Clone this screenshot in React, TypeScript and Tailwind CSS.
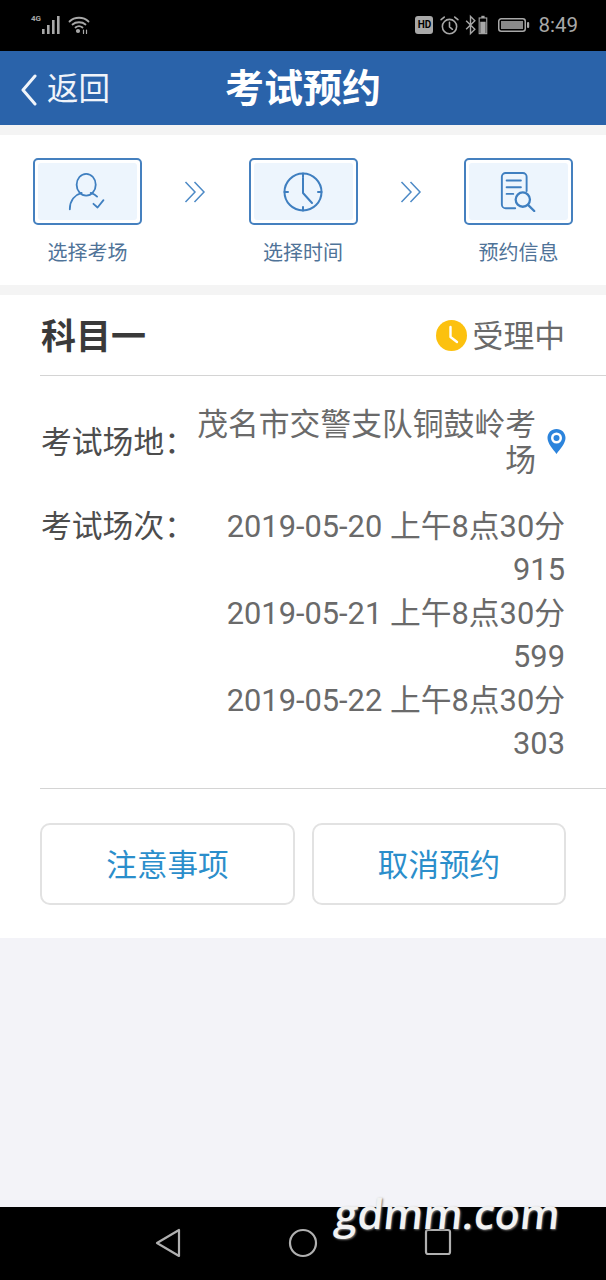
const FONT = 'font-["Roboto","Noto_Sans_CJK_SC",sans-serif]';

function StatusBar() {
  return (
    <div className="relative h-[51px] bg-black flex items-center justify-between pl-[28px] pr-[28px] shrink-0">
      <div className="flex items-center gap-[5px] mt-[-2px]">
        <svg width="35" height="22" viewBox="0 0 35 22" fill="#a8a8a8">
          <text x="3" y="7" fontSize="8" fontWeight="700" fill="#a8a8a8" fontFamily="Roboto">4G</text>
          <rect x="14" y="15" width="2.6" height="5" />
          <rect x="19" y="11" width="2.6" height="9" />
          <rect x="24" y="6" width="2.6" height="14" />
          <rect x="29" y="2" width="2.6" height="18" />
        </svg>
        <svg width="22" height="20" viewBox="0 0 22 20" fill="none" stroke="#a8a8a8" strokeWidth="1.8" strokeLinecap="round">
          <path d="M1.5 6.5c5-5 14-5 19 0" />
          <path d="M4.5 9.5c3.3-3 9.7-3 13 0" />
          <path d="M7.5 12.5c2-1.6 5-1.6 7 0" />
          <circle cx="10" cy="16" r="1.2" fill="#a8a8a8" />
          <path d="M15.5 15v3.5M18.5 18.5V15" strokeWidth="1.2" />
        </svg>
      </div>
      <div className="flex items-center text-[#a8a8a8] mt-[-1px]">
        <div className="w-[18px] h-[18px] rounded-[3px] bg-[#a8a8a8] flex items-center justify-center text-black text-[10px] font-bold font-['Roboto',sans-serif] leading-none">HD</div>
        <svg className="ml-[6px]" width="21" height="21" viewBox="0 0 20 20" fill="none" stroke="#a8a8a8" strokeWidth="1.5" strokeLinecap="round">
          <circle cx="10" cy="11" r="6.8" />
          <path d="M10 7v4.4l2.8 2.2M2 4.5 5 2M18 4.5 15 2" />
        </svg>
        <svg className="ml-[4px]" width="26" height="22" viewBox="0 0 24 20" fill="none" stroke="#a8a8a8" strokeWidth="1.3">
          <path d="M2 6l8 8-4 4V2l4 4-8 8" />
          <rect x="14" y="3.5" width="7" height="14.5" fill="none" strokeWidth="1" />
          <rect x="15" y="7" width="5" height="11" fill="#a8a8a8" stroke="none" />
          <rect x="16" y="1.5" width="3" height="2" fill="#a8a8a8" stroke="none" />
        </svg>
        <svg className="ml-[8px]" width="32" height="16" viewBox="0 0 32 16">
          <rect x="0.75" y="1.75" width="26.5" height="12.5" rx="2.5" fill="none" stroke="#a8a8a8" strokeWidth="1.5" />
          <rect x="3" y="4" width="22" height="8" fill="#8a8a8a" />
          <rect x="29" y="5" width="2.2" height="6" rx="1" fill="#a8a8a8" />
        </svg>
        <span className="ml-[8px] text-[20.5px] leading-none font-['Roboto',sans-serif] text-[#a8a8a8]">8:49</span>
      </div>
    </div>
  );
}

function Header() {
  return (
    <div className="relative h-[74px] bg-[#2a63aa] flex items-center justify-center shrink-0">
      <div className="absolute left-[20px] top-[23px] flex items-center text-[#f0f4fa]">
        <svg width="18" height="32" viewBox="0 0 18 32" fill="none" stroke="#f0f4fa" strokeWidth="3" strokeLinecap="round" strokeLinejoin="round">
          <path d="M15 2 3 16l12 14" />
        </svg>
        <span className="ml-[9px] text-[31.5px] leading-none">返回</span>
      </div>
      <span className="text-[39px] font-bold text-white leading-none mt-[3px]">考试预约</span>
    </div>
  );
}

function Step({ label, children }: { label: string; children: React.ReactNode }) {
  return (
    <div className="w-[109px] flex flex-col items-center">
      <div className="w-[109px] h-[67px] rounded-[5px] border-2 border-[#4580bf] bg-white p-[3px]">
        <div className="w-full h-full rounded-[3px] bg-[#edf5fd] flex items-center justify-center">{children}</div>
      </div>
      <span className="mt-[16px] text-[20px] leading-[24px] text-[#4f7398] whitespace-nowrap">{label}</span>
    </div>
  );
}

function Chevrons() {
  return (
    <svg className="mt-[23px]" width="22" height="22" viewBox="0 0 22 22" fill="none" stroke="#4d8ac6" strokeWidth="1.5">
      <path d="M1.5 1 11 11 1.5 21M10.5 1 20 11l-9.5 10" />
    </svg>
  );
}

export default function App() {
  return (
    <div className={`${FONT} relative w-[606px] h-[1280px] overflow-hidden flex flex-col bg-[#f3f3f8]`}>
      <StatusBar />
      <Header />
      <div className="h-[10px] bg-[#f4f4f4] shrink-0" />
      <div className="h-[150px] bg-white shrink-0 flex justify-between items-start pt-[23px] pl-[33px] pr-[33px]">
        <Step label="选择考场">
          <svg width="40" height="40" viewBox="0 0 42 44" fill="none" stroke="#3f7fc0" strokeWidth="2" strokeLinecap="round" strokeLinejoin="round">
            <ellipse cx="19" cy="14" rx="10.5" ry="12" />
            <path d="M1 41c0-10 6-16 13-18M24 23c3 1 5 2 7 4" />
            <path d="M27 35l4.5 4L38 31" />
          </svg>
        </Step>
        <Chevrons />
        <Step label="选择时间">
          <svg width="40" height="40" viewBox="0 0 40 40" fill="none" stroke="#3f7fc0" strokeWidth="2" strokeLinecap="round" strokeLinejoin="round">
            <circle cx="20" cy="20" r="18.5" />
            <path d="M20 6v15l9 10M20 1.5V5M20 35v3.5M1.5 20H5M35 20h3.5" />
          </svg>
        </Step>
        <Chevrons />
        <Step label="预约信息">
          <svg width="40" height="40" viewBox="0 0 40 42" fill="none" stroke="#3f7fc0" strokeWidth="2" strokeLinecap="round" strokeLinejoin="round">
            <path d="M16 38H6a4 4 0 0 1-4-4V5a4 4 0 0 1 4-4h18a4 4 0 0 1 4 4v15" />
            <path d="M7 9h15M7 16h15M7 23h7" />
            <circle cx="24" cy="29" r="7.5" strokeWidth="2.4" />
            <path d="M30 35l6 6" strokeWidth="2.4" />
          </svg>
        </Step>
      </div>
      <div className="h-[10px] bg-[#f4f4f4] shrink-0" />
      <div className="h-[643px] bg-white shrink-0 pl-[40px]">
        <div className="h-[81px] border-b border-[#d4d4d4] flex items-center justify-between pr-[41px] pt-[4px]">
          <span className="text-[35px] font-bold text-[#3a3a3a] leading-none ml-[1px]">科目一</span>
          <div className="flex items-center">
            <svg className="mt-[-2px]" width="31" height="31" viewBox="0 0 31 31">
              <circle cx="15.5" cy="15.5" r="15.5" fill="#fcc10f" />
              <path d="M14.5 7v10l6.5 5" fill="none" stroke="#fff" strokeWidth="2.4" strokeLinecap="round" strokeLinejoin="round" />
            </svg>
            <span className="ml-[6px] text-[30.8px] leading-none text-[#6a6a6a]">受理中</span>
          </div>
        </div>
        <div className="flex pt-[31px] pr-[40px] text-[30.8px] text-[#6a6a6a]">
          <span className="w-[148px] shrink-0 ml-[1px] pt-[18px] leading-[36px] text-[#4d4d4d] whitespace-nowrap">考试场地：</span>
          <div className="flex-1 flex items-center">
            <div className="w-[347px] text-right leading-[36px] pl-[7px] shrink-0">茂名市交警支队铜鼓岭考场</div>
            <svg className="ml-[11px] shrink-0 mt-[-4px]" width="19" height="25" viewBox="0 0 19 25">
              <path d="M9.5 0C4.3 0 .5 3.9.5 9c0 5.5 5.5 11 9 16 3.5-5 9-10.5 9-16C18.5 3.9 14.7 0 9.5 0Z" fill="#2c84dc" />
              <circle cx="9.5" cy="9" r="5.5" fill="#fff" />
              <circle cx="9.5" cy="9" r="3" fill="#2c84dc" />
            </svg>
          </div>
        </div>
        <div className="flex mt-[26px] pr-[41px] text-[30.8px] leading-[43.4px] text-[#6a6a6a]">
          <span className="shrink-0 ml-[1px] text-[#4d4d4d] whitespace-nowrap">考试场次：</span>
          <div className="flex-1 text-right">
            <div className="whitespace-nowrap">2019-05-20 上午8点30分</div>
            <div>915</div>
            <div className="whitespace-nowrap">2019-05-21 上午8点30分</div>
            <div>599</div>
            <div className="whitespace-nowrap">2019-05-22 上午8点30分</div>
            <div>303</div>
          </div>
        </div>
        <div className="mt-[23px] border-t border-[#d4d4d4] pt-[34px] pr-[40px] flex gap-[17px]">
          <div className="w-[255px] h-[82px] rounded-[10px] border-2 border-[#e2e2e2] flex items-center justify-center text-[30.6px] text-[#2b8ecb] pt-[4px]">注意事项</div>
          <div className="w-[254px] h-[82px] rounded-[10px] border-2 border-[#e2e2e2] flex items-center justify-center text-[30.6px] text-[#2b8ecb] pt-[4px]">取消预约</div>
        </div>
      </div>
      <div className="flex-1" />
      <div className="h-[73px] bg-black shrink-0 flex items-start pl-[155px] pt-[21px]">
        <svg width="26" height="30" viewBox="0 0 26 30" fill="none" stroke="#b0b0b0" strokeWidth="2.2" strokeLinejoin="round">
          <path d="M24 2v26L2 15Z" />
        </svg>
        <svg className="ml-[107px]" width="30" height="30" viewBox="0 0 30 30" fill="none" stroke="#b0b0b0" strokeWidth="2.2">
          <circle cx="15" cy="15" r="13" />
        </svg>
        <svg className="ml-[106px]" width="28" height="28" viewBox="0 0 28 28" fill="none" stroke="#b0b0b0" strokeWidth="2.2">
          <rect x="2" y="2" width="24" height="24" rx="2" />
        </svg>
      </div>
      <span className="absolute left-[335px] top-[1188px] text-[41.5px] leading-[50px] font-semibold text-[#f2f2f2] -skew-x-6 font-['Open_Sans',sans-serif] [text-shadow:1px_1px_2px_#777]">gdmm.com</span>
    </div>
  );
}
